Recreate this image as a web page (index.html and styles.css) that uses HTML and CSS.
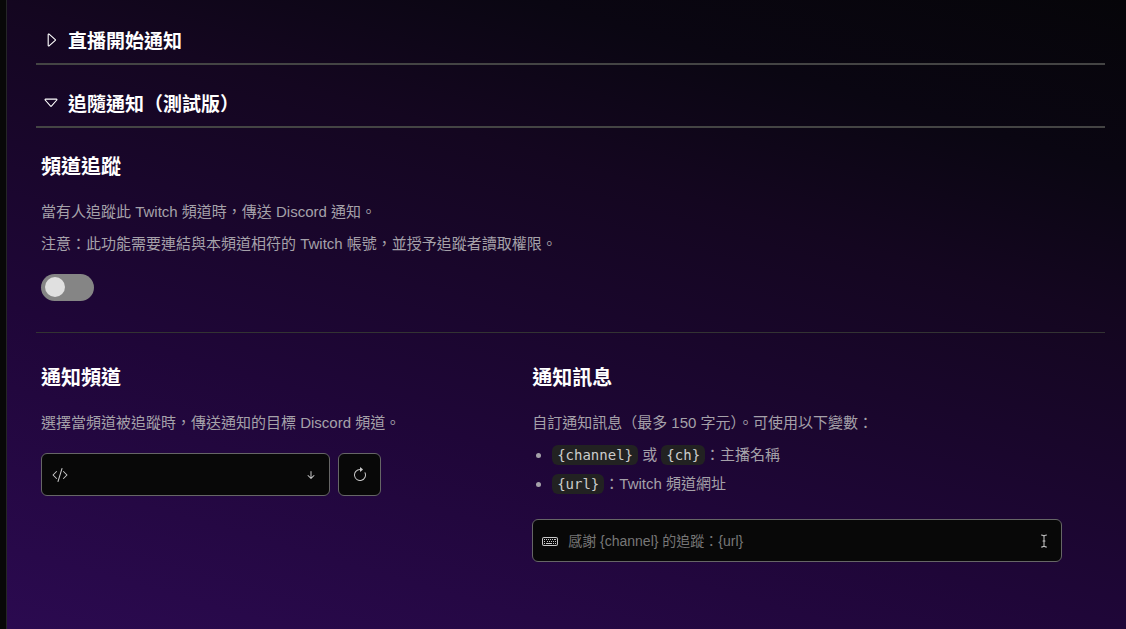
FILE: index.html
```html
<!DOCTYPE html>
<html lang="zh-Hant">
<head>
  <meta charset="UTF-8">
  <meta name="viewport" content="width=device-width, initial-scale=1.0">
  <title>通知設定</title>
  <link rel="stylesheet" href="styles.css">
</head>
<body>
  <main class="content">
    <details class="section">
      <summary class="section-title">
        <svg class="icon caret" viewBox="0 0 16 16"><path d="M6 12.796V3.204L11.481 8zm.659.753 5.48-4.796a1 1 0 0 0 0-1.506L6.66 2.451C6.011 1.885 5 2.345 5 3.204v9.592a1 1 0 0 0 1.659.753"/></svg>
        直播開始通知
      </summary>
    </details>

    <details class="section" open>
      <summary class="section-title">
        <svg class="icon caret" viewBox="0 0 16 16"><path d="M3.204 5h9.592L8 10.481zm-.753.659 4.796 5.48a1 1 0 0 0 1.506 0l4.796-5.48c.566-.647.106-1.659-.753-1.659H3.204a1 1 0 0 0-.753 1.659"/></svg>
        追隨通知（測試版）
      </summary>

      <div class="block follow">
        <h2>頻道追蹤</h2>
        <p>當有人追蹤此 Twitch 頻道時，傳送 Discord 通知。</p>
        <p>注意：此功能需要連結與本頻道相符的 Twitch 帳號，並授予追蹤者讀取權限。</p>
        <input type="checkbox" class="switch" aria-label="頻道追蹤">
      </div>

      <div class="columns">
        <div class="block">
          <h2><label for="channel">通知頻道</label></h2>
          <p>選擇當頻道被追蹤時，傳送通知的目標 Discord 頻道。</p>
          <div class="row">
            <div class="field select-field">
              <svg class="icon" viewBox="0 0 16 16"><path d="M10.478 1.647a.5.5 0 1 0-.956-.294l-4 13a.5.5 0 0 0 .956.294zM4.854 4.146a.5.5 0 0 1 0 .708L1.707 8l3.147 3.146a.5.5 0 0 1-.708.708l-3.5-3.5a.5.5 0 0 1 0-.708l3.5-3.5a.5.5 0 0 1 .708 0m6.292 0a.5.5 0 0 0 0 .708L14.293 8l-3.147 3.146a.5.5 0 0 0 .708.708l3.5-3.5a.5.5 0 0 0 0-.708l-3.5-3.5a.5.5 0 0 0-.708 0"/></svg>
              <select id="channel"></select>
              <svg class="icon" viewBox="0 0 16 16"><path d="M8 4a.5.5 0 0 1 .5.5v5.793l2.146-2.147a.5.5 0 0 1 .708.708l-3 3a.5.5 0 0 1-.708 0l-3-3a.5.5 0 1 1 .708-.708L7.5 10.293V4.5A.5.5 0 0 1 8 4"/></svg>
            </div>
            <button type="button" class="refresh" aria-label="重新整理">
              <svg class="icon" viewBox="0 0 16 16"><path d="M8 3a5 5 0 1 0 4.546 2.914.5.5 0 0 1 .908-.417A6 6 0 1 1 8 2z"/><path d="M8 4.466V.534a.25.25 0 0 1 .41-.192l2.36 1.966c.12.1.12.284 0 .384L8.41 4.658A.25.25 0 0 1 8 4.466"/></svg>
            </button>
          </div>
        </div>

        <div class="block">
          <h2><label for="message">通知訊息</label></h2>
          <p>自訂通知訊息（最多 150 字元）。可使用以下變數：</p>
          <ul class="variables">
            <li><code>{channel}</code> 或 <code>{ch}</code>：主播名稱</li>
            <li><code>{url}</code>：Twitch 頻道網址</li>
          </ul>
          <div class="field">
            <svg class="icon" viewBox="0 0 16 16"><path d="M14 5a1 1 0 0 1 1 1v5a1 1 0 0 1-1 1H2a1 1 0 0 1-1-1V6a1 1 0 0 1 1-1zM2 4a2 2 0 0 0-2 2v5a2 2 0 0 0 2 2h12a2 2 0 0 0 2-2V6a2 2 0 0 0-2-2z"/><path d="M2 6h1v1H2zM4 6h1v1H4zM6 6h1v1H6zM8 6h1v1H8zM10 6h1v1h-1zM12 6h2v1h-2zM2 8h1v1H2zM5 8h1v1H5zM7 8h1v1H7zM9 8h1v1H9zM11 8h1v1h-1zM13 8h1v1h-1zM2 10h1v1H2zM4 10h6v1H4zM11 10h1v1h-1zM13 10h1v1h-1z"/></svg>
            <input type="text" id="message" maxlength="150" placeholder="感謝 {channel} 的追蹤：{url}">
            <svg class="icon" viewBox="0 0 16 16"><path d="M5 2a.5.5 0 0 1 .5-.5c.862 0 1.573.287 2.06.566.174.099.321.198.44.286.119-.088.266-.187.44-.286A4.165 4.165 0 0 1 10.5 1.5a.5.5 0 0 1 0 1c-.638 0-1.177.213-1.564.434a3.49 3.49 0 0 0-.436.294V7.5H9a.5.5 0 0 1 0 1h-.5v4.272c.1.08.248.187.436.294.387.221.926.434 1.564.434a.5.5 0 0 1 0 1 4.165 4.165 0 0 1-2.06-.566A4.561 4.561 0 0 1 8 13.65a4.561 4.561 0 0 1-.44.285 4.165 4.165 0 0 1-2.06.566.5.5 0 0 1 0-1c.638 0 1.177-.213 1.564-.434.188-.107.335-.214.436-.294V8.5H7a.5.5 0 0 1 0-1h.5V3.228a3.49 3.49 0 0 0-.436-.294A3.166 3.166 0 0 0 5.5 2.5.5.5 0 0 1 5 2"/></svg>
          </div>
        </div>
      </div>
    </details>
  </main>
</body>
</html>
```
FILE: styles.css
```css
* {
  box-sizing: border-box;
}

body {
  margin: 0;
  padding-left: 6px;
  background: #080808;
  color: #a5a1a9;
  font-family: "Liberation Sans", "Noto Sans CJK TC", sans-serif;
  font-size: 15px;
}

.content {
  min-height: 100vh;
  padding: 16px 21px 16px 29px;
  border-left: 1px solid #252528;
  background: linear-gradient(16deg, #2b0a50, #1f0638 34%, #140620 66%, #0a0612 82%, #060509);
}

.icon {
  flex: none;
  width: 16px;
  height: 16px;
  fill: currentColor;
}

.caret {
  width: 18px;
  height: 18px;
}

.section-title {
  display: flex;
  align-items: center;
  gap: 8px;
  height: 49px;
  margin-bottom: 14px;
  padding-left: 6px;
  border-bottom: 2px solid #444;
  color: #fff;
  font-size: 19px;
  font-weight: bold;
  cursor: pointer;
}

.block {
  padding: 0 5px;
}

.block h2 {
  margin: 0 0 17px;
  color: #fff;
  font-size: 20px;
  line-height: 32px;
}

.block p {
  margin: 0 0 8px;
  line-height: 24px;
}

.follow {
  padding-top: 9px;
  padding-bottom: 31px;
  border-bottom: 1px solid #333;
}

/* toggle */
.switch {
  appearance: none;
  display: block;
  width: 53px;
  height: 27px;
  margin: 18px 0 0;
  padding: 3px 4px;
  border-radius: 14px;
  background: #858585;
  cursor: pointer;
}

.switch::before {
  content: "";
  display: block;
  width: 20px;
  height: 20px;
  border-radius: 50%;
  background: #e0e0e0;
}

.switch:checked {
  background: #9146ff;
}

.switch:checked::before {
  margin-left: auto;
}

.columns {
  display: grid;
  grid-template-columns: 17fr 20fr;
  padding-top: 29px;
}

.row {
  display: flex;
  gap: 8px;
  margin-top: 18px;
}

/* inputs */
.field {
  display: flex;
  align-items: center;
  gap: 10px;
  width: 100%;
  max-width: 530px;
  height: 43px;
  padding: 0 9px;
  border: 1px solid #666;
  border-radius: 6px;
  background: #080808;
  color: #c8c8c8;
}

.select-field {
  max-width: 289px;
  padding: 0 10px;
}

.field select,
.field input {
  flex: 1;
  min-width: 0;
  height: 100%;
  padding: 0;
  appearance: none;
  border: none;
  outline: none;
  background: none;
  color: inherit;
  font: inherit;
  font-size: 14px;
}

.field input::placeholder {
  color: #777;
}

.refresh {
  display: flex;
  align-items: center;
  justify-content: center;
  width: 43px;
  height: 43px;
  padding: 0;
  border: 1px solid #666;
  border-radius: 6px;
  background: #080808;
  color: #c8c8c8;
  cursor: pointer;
}

.variables {
  margin: 0 0 23px;
  padding-left: 20px;
}

.variables li {
  height: 24px;
  margin-bottom: 5px;
  line-height: 24px;
}

.variables code {
  padding: 2px 5px;
  border-radius: 6px;
  background: #222;
  color: #ccc;
  font-family: "DejaVu Sans Mono", monospace;
  font-size: 14px;
}
```
